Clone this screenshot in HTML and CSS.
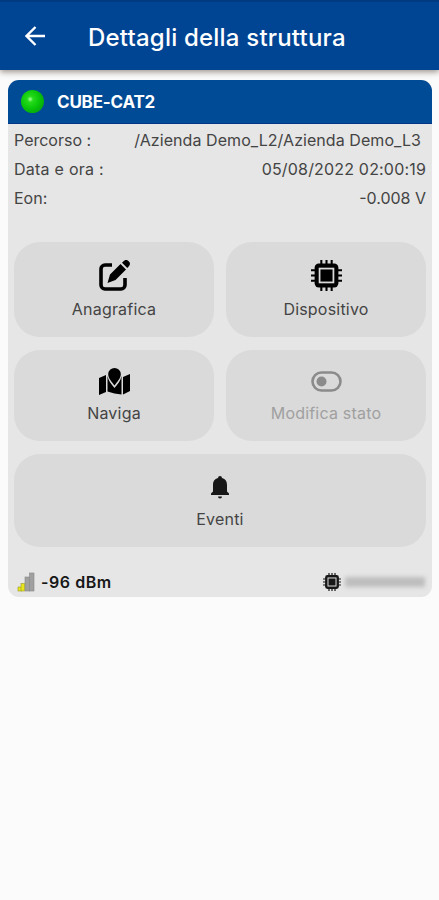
FILE: index.html
```html
<!DOCTYPE html>
<html lang="it">
<head>
<meta charset="utf-8">
<title>Dettagli della struttura</title>
<link rel="stylesheet" href="styles.css">
</head>
<body>
<svg width="0" height="0" class="defs">
  <symbol id="chip" viewBox="0 0 30 30">
    <path d="M10 0v30M15 0v30M20 0v30M0 10h30M0 15h30M0 20h30" stroke="currentColor" stroke-width="2"/>
    <rect x="3.5" y="3.5" width="23" height="23" rx="4" fill="currentColor"/>
    <rect x="8.3" y="8.3" width="13.4" height="13.4" fill="none" stroke="#dadada" stroke-width="1.7"/>
  </symbol>
</svg>
<header class="bar">
  <svg class="back" viewBox="0 0 20 20"><path d="M20 10H2M10.500 1L1.500 10l9 9" fill="none" stroke="currentColor" stroke-width="2.400"/></svg>
  <h1>Dettagli della struttura</h1>
</header>
<main class="card">
  <div class="head"><span class="led"></span><h2>CUBE-CAT2</h2></div>
  <dl class="info">
    <div class="row"><dt>Percorso :</dt><dd class="path">/Azienda Demo_L2/Azienda Demo_L3</dd></div>
    <div class="row"><dt class="when">Data e ora :</dt><dd class="date">05/08/2022 02:00:19</dd></div>
    <div class="row"><dt>Eon:</dt><dd>-0.008 V</dd></div>
  </dl>
  <div class="grid">
    <button class="tile">
      <svg class="ico" viewBox="0 0 31 31"><path d="M13 5H6a4 4 0 0 0-4 4v16a4 4 0 0 0 4 4h16a4 4 0 0 0 4-4v-7" fill="none" stroke="currentColor" stroke-width="3.600"/><path d="M21.500 4l5.500 5.500L16.500 20 8.500 23 11 14.500zM23 2.700l1.500-1.500a3.500 3.500 0 0 1 5.200 5.200L28.300 8z" fill="currentColor"/></svg>
      <span>Anagrafica</span>
    </button>
    <button class="tile">
      <svg class="ico"><use href="#chip"/></svg>
      <span>Dispositivo</span>
    </button>
    <button class="tile">
      <svg class="ico map" viewBox="0 0 31 27"><path d="M0 10l7-3v17L0 27zM24 9l7-3v17l-7 3.500zM8.500 8c.8 4.500 3.500 8 7 12 3.500-4 6.200-7.500 7-12V26.500L15.500 25.500l-7-2z" fill="currentColor"/><path d="M15.500 17.500C13 14 9.200 10.500 9.200 6.300a6.300 6.300 0 0 1 12.600 0c0 4.200-3.800 7.700-6.300 11.200z" fill="currentColor"/></svg>
      <span>Naviga</span>
    </button>
    <button class="tile off" disabled>
      <svg class="ico toggle" viewBox="0 0 31 21"><rect x="1.500" y="1.500" width="28" height="18" rx="9" fill="none" stroke="currentColor" stroke-width="2.600"/><circle cx="10.500" cy="10.500" r="5" fill="currentColor"/></svg>
      <span>Modifica stato</span>
    </button>
    <button class="tile wide">
      <svg class="bell" viewBox="0 0 20 24"><path d="M8 3a2 2 0 0 1 4 0c3.500.8 5 3.500 5 7v6.500l2 2V20H1v-1.500l2-2V10c0-3.500 1.500-6.200 5-7zM8 21.500h4a2 2 0 0 1-4 0z" fill="currentColor"/></svg>
      <span>Eventi</span>
    </button>
  </div>
  <footer class="foot">
    <svg class="signal" viewBox="0 0 18 20"><g fill="#a0a0a0" stroke="#888" stroke-width=".6"><rect x="8" y="5" width="4.500" height="14"/><rect x="12.500" y="1" width="4.500" height="18"/></g><g fill="#e8e51c" stroke="#9c9a25" stroke-width=".6"><rect x="1" y="15" width="3.500" height="4"/><rect x="4" y="11.500" width="3.500" height="7.500"/></g></svg>
    <strong class="dbm">-96 dBm</strong>
    <svg class="mini"><use href="#chip"/></svg>
    <span class="redacted"></span>
  </footer>
</main>
</body>
</html>
```
FILE: styles.css
```css
* { box-sizing: border-box; }
body { margin: 0; min-height: 900px; background: #fbfbfb; font: 16px/20px Inter, sans-serif; color: #444; }
h1, h2, dl, dd { margin: 0; }
.defs { display: block; height: 0; }
.bar { height: 70px; padding: 3px 0 0 25px; display: flex; align-items: center; background: #004494; border-top: 2px solid #003a80; color: #fff; box-shadow: 0 2px 6px rgba(60, 40, 30, .5); }
.back { width: 20px; height: 20px; flex: none; margin-top: -3px; }
h1 { margin-left: 43px; font-size: 24px; line-height: 30px; font-weight: 500; white-space: nowrap; letter-spacing: .2px; }
.card { margin: 10px 7px 0 8px; height: 517px; border-radius: 11px; background: #e6e6e6; overflow: hidden; display: flex; flex-direction: column; }
.head { height: 44px; flex: none; display: flex; align-items: center; padding-left: 13px; background: #004b95; border-bottom: 1px solid #00358a; color: #fff; }
.led { width: 23px; height: 23px; border-radius: 50%; background: radial-gradient(circle at 40% 40%, #b0ff9e 0, #25dc1a 15%, #08c408 50%, #068c16 100%); }
h2 { margin-left: 13px; font-size: 17px; line-height: 22px; font-weight: 700; letter-spacing: -.2px; }
.info { padding: 1px 6px 0; }
.row { height: 29px; display: flex; align-items: center; justify-content: space-between; white-space: nowrap; }
.path { padding-right: 5px; letter-spacing: .06px; }
.when { letter-spacing: .25px; }
.date { letter-spacing: .18px; }
.grid { margin: 30px 6px 0; display: grid; grid-template-columns: 200px 200px; grid-template-rows: 95px 91px 93px; gap: 13px 12px; }
.tile { border: 0; border-radius: 26px; background: #dadada; padding: 0 0 18px; font: inherit; letter-spacing: .2px; color: #444; display: flex; flex-direction: column; align-items: center; justify-content: flex-end; gap: 8px; }
.tile svg { color: #000; }
.ico { width: 31px; height: 31px; }
.map { height: 27px; }
.toggle { height: 21px; margin-bottom: 3px; }
.tile.off { color: #a0a0a0; }
.tile.off svg { color: #8b8b8b; }
.wide { grid-column: 1 / 3; }
.tile .bell { width: 20px; height: 24px; color: #171717; margin-bottom: 2px; }
.foot { margin: 22px 7px 0 9px; height: 26px; display: flex; align-items: center; color: #171717; }
.signal { width: 18px; height: 20px; }
.dbm { margin-left: 6px; font-weight: 600; letter-spacing: .55px; }
.mini { width: 18px; height: 18px; margin-left: auto; }
.redacted { width: 80px; height: 10px; margin-left: 4px; background: #bdbdbd; filter: blur(2px); }
```
